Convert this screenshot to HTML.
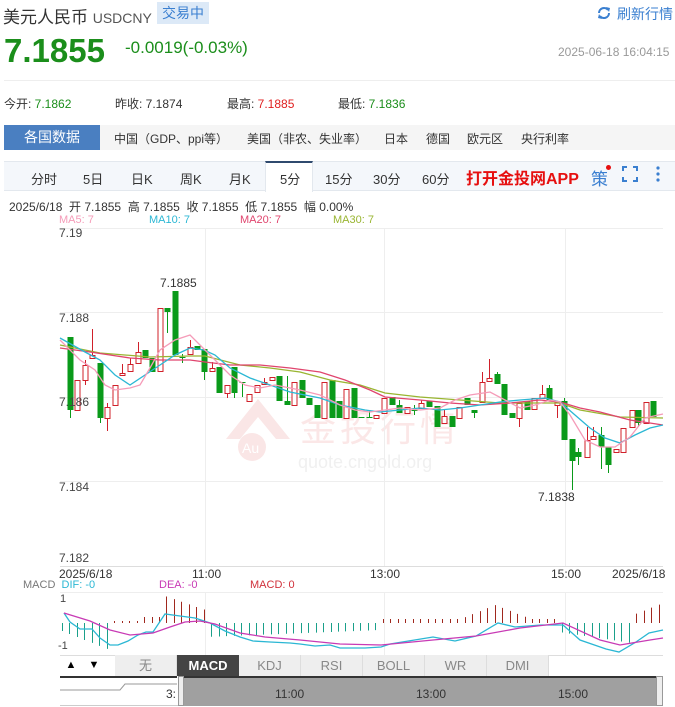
<!DOCTYPE html>
<html><head><meta charset="utf-8">
<style>
*{margin:0;padding:0;box-sizing:border-box}
body{width:675px;height:707px;background:#fff;font-family:"Liberation Sans","Noto Sans CJK SC",sans-serif;position:relative;overflow:hidden;color:#333}
.a{position:absolute;white-space:nowrap}
</style></head><body>
<div class="a" style="left:3px;top:3px;font-size:17px;color:#333">美元人民币 <span style="font-size:14px;color:#555">USDCNY</span></div>
<div class="a" style="left:157px;top:2px;width:52px;height:22px;background:#dce9f7;color:#3a7fd0;font-size:14px;line-height:22px;text-align:center">交易中</div>
<svg class="a" style="left:596px;top:5px" width="16" height="16" viewBox="0 0 16 16"><path d="M3 8a5 5 0 0 1 9-3" fill="none" stroke="#3a7fd0" stroke-width="2"/><path d="M13 8a5 5 0 0 1-9 3" fill="none" stroke="#3a7fd0" stroke-width="2"/><path d="M10 2l4 1-1 4z M6 14l-4-1 1-4z" fill="#3a7fd0"/></svg>
<div class="a" style="left:617px;top:4px;font-size:14px;color:#3a7fd0">刷新行情</div>
<div class="a" style="left:4px;top:32px;font-size:33px;font-weight:bold;color:#1b8e1b">7.1855</div>
<div class="a" style="left:125px;top:38px;font-size:17px;color:#1b8e1b">-0.0019(-0.03%)</div>
<div class="a" style="left:558px;top:45px;font-size:12px;color:#999">2025-06-18 16:04:15</div>
<div class="a" style="left:4px;top:80px;width:671px;height:1px;background:#eee"></div>
<div class="a" style="left:4px;top:95px;font-size:12px;color:#333">今开: <span style="color:#1b8e1b">7.1862</span></div>
<div class="a" style="left:115px;top:95px;font-size:12px;color:#333">昨收: 7.1874</div>
<div class="a" style="left:227px;top:95px;font-size:12px;color:#333">最高: <span style="color:#e02020">7.1885</span></div>
<div class="a" style="left:338px;top:95px;font-size:12px;color:#333">最低: <span style="color:#1b8e1b">7.1836</span></div>
<div class="a" style="left:4px;top:125px;width:671px;height:25px;background:#f5f5f5"></div>
<div class="a" style="left:4px;top:125px;width:96px;height:25px;background:#4a7fc1;color:#fff;font-size:14px;line-height:25px;text-align:center">各国数据</div>
<div class="a" style="left:114px;top:130px;font-size:12px;color:#333">中国（GDP、ppi等）</div>
<div class="a" style="left:247px;top:130px;font-size:12px;color:#333">美国（非农、失业率）</div>
<div class="a" style="left:384px;top:130px;font-size:12px;color:#333">日本</div>
<div class="a" style="left:426px;top:130px;font-size:12px;color:#333">德国</div>
<div class="a" style="left:467px;top:130px;font-size:12px;color:#333">欧元区</div>
<div class="a" style="left:521px;top:130px;font-size:12px;color:#333">央行利率</div>
<div class="a" style="left:4px;top:161px;width:671px;height:30px;background:#f4f7fb;border-top:1px solid #e3e8ee;border-bottom:1px solid #e3e8ee"></div>
<div class="a" style="left:265px;top:161px;width:48px;height:31px;background:#fff;border-top:2px solid #2f4a6e;border-left:1px solid #e3e8ee;border-right:1px solid #e3e8ee"></div>
<div class="a" style="top:169px;left:0;font-size:13px;color:#333;width:675px;height:18px">
<span class="a" style="left:31px">分时</span><span class="a" style="left:83px">5日</span><span class="a" style="left:131px">日K</span><span class="a" style="left:180px">周K</span><span class="a" style="left:229px">月K</span><span class="a" style="left:280px">5分</span><span class="a" style="left:325px">15分</span><span class="a" style="left:373px">30分</span><span class="a" style="left:422px">60分</span></div>
<div class="a" style="left:466px;top:165px;font-size:16px;font-weight:bold;color:#e61010">打开金投网APP</div>
<div class="a" style="left:591px;top:165px;font-size:17px;color:#3a7fd0">策</div>
<div class="a" style="left:606px;top:165px;width:5px;height:5px;border-radius:50%;background:#e61010"></div>
<svg class="a" style="left:622px;top:166px" width="16" height="16"><path d="M1 5V1h4M11 1h4v4M15 11v4h-4M5 15H1v-4" fill="none" stroke="#3a7fd0" stroke-width="2"/></svg>
<svg class="a" style="left:655px;top:166px" width="6" height="16"><circle cx="3" cy="2" r="1.6" fill="#3a7fd0"/><circle cx="3" cy="8" r="1.6" fill="#3a7fd0"/><circle cx="3" cy="14" r="1.6" fill="#3a7fd0"/></svg>
<div class="a" style="left:9px;top:198px;font-size:12px;color:#333">2025/6/18&nbsp; 开 7.1855&nbsp; 高 7.1855&nbsp; 收 7.1855&nbsp; 低 7.1855&nbsp; 幅 0.00%</div>
<div class="a" style="left:59px;top:214px;font-size:11px;color:#f59bb8">MA5: 7</div>
<div class="a" style="left:149px;top:214px;font-size:11px;color:#2bb7d4">MA10: 7</div>
<div class="a" style="left:240px;top:214px;font-size:11px;color:#e0456e">MA20: 7</div>
<div class="a" style="left:333px;top:214px;font-size:11px;color:#99b531">MA30: 7</div>
<div class="a" style="left:300px;top:400px;font-size:36px;color:#fbe7e7;letter-spacing:4px">金投行情</div>
<div class="a" style="left:298px;top:452px;font-size:18px;color:#f0f0f0">quote.cngold.org</div>
<svg class="a" style="left:222px;top:395px" width="72" height="72"><path d="M36 4L4 44h14l18-22 18 22h14z" fill="#fae6e6"/><circle cx="30" cy="52" r="14" fill="#fae6e6"/><text x="20" y="58" font-size="14" fill="#fff" font-family="Liberation Sans">Au</text></svg>
<svg id="ch" class="a" style="left:0;top:0" width="675" height="707"></svg>
<div class="a" style="left:59px;top:226px;font-size:12px;color:#444">7.19</div>
<div class="a" style="left:59px;top:311px;font-size:12px;color:#444">7.188</div>
<div class="a" style="left:59px;top:395px;font-size:12px;color:#444">7.186</div>
<div class="a" style="left:59px;top:480px;font-size:12px;color:#444">7.184</div>
<div class="a" style="left:59px;top:551px;font-size:12px;color:#444">7.182</div>
<div class="a" style="left:160px;top:276px;font-size:12px;color:#333">7.1885</div>
<div class="a" style="left:538px;top:490px;font-size:12px;color:#333">7.1838</div>
<div class="a" style="left:59px;top:567px;font-size:12px;color:#333">2025/6/18</div>
<div class="a" style="left:192px;top:567px;font-size:12px;color:#333">11:00</div>
<div class="a" style="left:370px;top:567px;font-size:12px;color:#333">13:00</div>
<div class="a" style="left:551px;top:567px;font-size:12px;color:#333">15:00</div>
<div class="a" style="left:612px;top:567px;font-size:12px;color:#333">2025/6/18</div>
<div class="a" style="left:23px;top:579px;font-size:11px;color:#777">MACD&nbsp; <span style="color:#2bb7d4">DIF: -0</span></div>
<div class="a" style="left:159px;top:579px;font-size:11px;color:#c83ab5">DEA: -0</div>
<div class="a" style="left:250px;top:579px;font-size:11px;color:#d0303a">MACD: 0</div>
<div class="a" style="left:60px;top:593px;font-size:11px;color:#444">1</div>
<div class="a" style="left:58px;top:640px;font-size:11px;color:#444">-1</div>
<div class="a" style="left:60px;top:655px;width:490px;height:21px;font-size:13px;color:#888">
<span class="a" style="left:0;width:22px;height:21px;line-height:21px;text-align:center;color:#000;font-size:11px">▲</span>
<span class="a" style="left:23px;width:22px;height:21px;line-height:21px;text-align:center;color:#000;font-size:11px">▼</span>
<span class="a" style="left:55px;width:62px;height:21px;line-height:21px;text-align:center;background:#eee;border-right:1px solid #ddd">无</span>
<span class="a" style="left:117px;width:62px;height:21px;line-height:21px;text-align:center;background:#444;color:#fff;font-weight:bold">MACD</span>
<span class="a" style="left:179px;width:62px;height:21px;line-height:21px;text-align:center;background:#eee;border-right:1px solid #ddd">KDJ</span>
<span class="a" style="left:241px;width:62px;height:21px;line-height:21px;text-align:center;background:#eee;border-right:1px solid #ddd">RSI</span>
<span class="a" style="left:303px;width:62px;height:21px;line-height:21px;text-align:center;background:#eee;border-right:1px solid #ddd">BOLL</span>
<span class="a" style="left:365px;width:62px;height:21px;line-height:21px;text-align:center;background:#eee;border-right:1px solid #ddd">WR</span>
<span class="a" style="left:427px;width:62px;height:21px;line-height:21px;text-align:center;background:#eee;border-right:1px solid #ddd">DMI</span></div>
<div class="a" style="left:60px;top:676px;width:117px;height:2px;background:#333"></div>
<div class="a" style="left:60px;top:705px;width:603px;height:1px;background:#ccc"></div>
<div class="a" style="left:184px;top:676px;width:478px;height:30px;background:#a0a0a0;border-top:2px solid #333"></div>
<div class="a" style="left:178px;top:676px;width:6px;height:30px;background:#eee;border:1px solid #999"></div>
<div class="a" style="left:656px;top:676px;width:7px;height:30px;background:#eee;border:1px solid #999"></div>
<div class="a" style="left:166px;top:687px;font-size:12px;color:#333">3:</div>
<div class="a" style="left:275px;top:687px;font-size:12px;color:#333">11:00</div>
<div class="a" style="left:416px;top:687px;font-size:12px;color:#333">13:00</div>
<div class="a" style="left:558px;top:687px;font-size:12px;color:#333">15:00</div>
<script>
var s='';
function L(x1,y1,x2,y2,c){s+='<line x1="'+x1+'" y1="'+y1+'" x2="'+x2+'" y2="'+y2+'" stroke="'+c+'" stroke-width="1"/>';}
[228,312,397,481,566].forEach(function(y){L(60,y+.5,663,y+.5,'#eee')});
[205,384,565].forEach(function(x){L(x+.5,228,x+.5,566,'#eee');L(x+.5,592,x+.5,655,'#eee')});
L(60,566.5,663,566.5,'#ddd');L(60,592.5,663,592.5,'#eee');L(60,655.5,663,655.5,'#ddd');
var c=[[70,337,410,337,418,'g'],[77,380,410,380,410,'r'],[85,365,380,360,385,'r'],[92,355,358,329,358,'r'],[100,363,418,363,423,'g'],[107,407,418,403,431,'r'],[115,385,405,385,405,'r'],[122,373,375,364,375,'r'],[130,364,371,358,371,'r'],[138,352,363,342,363,'r'],[145,350,358,350,358,'g'],[152,358,372,358,372,'g'],[160,308,371,308,371,'r'],[167,308,312,308,333,'g'],[175,291,355,291,355,'g'],[182,357,358,354,363,'g'],[190,347,354,340,354,'r'],[197,346,350,346,350,'g'],[204,349,372,349,380,'g'],[212,368,371,362,371,'r'],[219,367,393,367,393,'g'],[227,385,393,385,398,'r'],[234,367,393,367,398,'g'],[242,382,383,382,397,'g'],[249,394,401,394,401,'r'],[257,385,392,385,392,'r'],[264,382,384,378,384,'r'],[272,377,380,377,380,'r'],[279,376,401,376,401,'g'],[287,401,405,376,405,'g'],[294,382,405,382,405,'r'],[302,380,398,380,398,'g'],[309,398,405,398,405,'g'],[317,405,418,405,418,'g'],[324,382,418,382,418,'r'],[332,380,418,380,418,'g'],[339,401,418,401,418,'g'],[346,389,418,389,418,'r'],[354,388,418,388,418,'g'],[361,417,418,417,418,'g'],[369,417,418,410,418,'g'],[376,415,418,415,418,'r'],[384,398,413,398,413,'r'],[392,397,405,397,405,'g'],[399,405,413,400,413,'g'],[407,407,413,407,413,'r'],[414,410,411,405,415,'g'],[421,403,408,400,408,'r'],[429,401,407,401,407,'g'],[437,406,427,406,427,'g'],[444,416,423,410,423,'r'],[452,416,427,416,427,'g'],[459,407,418,407,418,'r'],[467,398,405,398,405,'g'],[474,410,413,410,418,'g'],[482,382,402,372,402,'r'],[489,378,381,359,381,'r'],[497,374,384,372,384,'g'],[504,384,415,384,415,'g'],[512,413,418,413,418,'g'],[519,403,418,403,427,'r'],[527,401,410,401,410,'g'],[534,398,409,398,409,'r'],[542,394,398,385,398,'r'],[549,388,401,385,401,'g'],[557,402,405,402,418,'r'],[564,401,440,398,440,'g'],[572,439,461,439,490,'g'],[578,452,457,448,465,'g'],[587,440,457,427,457,'r'],[593,436,439,427,439,'r'],[601,435,447,427,469,'g'],[608,447,465,447,473,'g'],[616,449,452,449,452,'r'],[623,428,452,428,452,'r'],[632,410,427,410,427,'r'],[638,410,423,410,427,'g'],[646,402,423,402,423,'r'],[653,401,417,401,417,'g']];
c.forEach(function(k){var col=k[5]=='g'?'#0a9a1a':'#d0202a';L(k[0]+.5,k[3],k[0]+.5,k[4],col);
 var h=Math.max(k[2]-k[1],1);
 if(k[5]=='g')s+='<rect x="'+(k[0]-2.5)+'" y="'+k[1]+'" width="6" height="'+h+'" fill="'+col+'"/>';
 else s+='<rect x="'+(k[0]-2)+'" y="'+(k[1]+.5)+'" width="5" height="'+h+'" fill="#fff" stroke="'+col+'"/>';});
function P(a,c,w){s+='<polyline fill="none" stroke="'+c+'" stroke-width="'+(w||1.3)+'" points="'+a.map(function(p){return p.join(',')}).join(' ')+'"/>';}
P([[60,345],[100,353],[150,357],[190,356],[205,356],[240,365],[270,368],[300,372],[330,380],[360,385],[385,393],[420,397],[460,400],[500,403],[540,403],[560,403],[580,410],[620,417],[663,418]],'#99b531');
P([[60,348],[90,352],[110,355],[130,358],[160,360],[190,360],[205,362],[230,365],[260,365],[290,368],[320,372],[345,380],[370,390],[385,397],[420,400],[450,403],[480,405],[510,403],[540,400],[560,402],[580,408],[600,412],[630,420],[663,425]],'#e0456e');
P([[60,338],[85,352],[100,360],[115,375],[130,385],[145,375],[160,365],[175,355],[190,348],[204,350],[215,355],[230,368],[250,378],[270,385],[290,392],[320,398],[340,405],[365,410],[380,412],[400,410],[420,408],[440,410],[460,408],[480,405],[500,402],[520,400],[545,398],[560,402],[575,415],[590,428],[605,438],[620,443],[635,435],[650,428],[663,425]],'#2bb7d4');
P([[60,340],[80,360],[95,370],[105,385],[115,390],[130,388],[140,385],[150,368],[160,350],[175,340],[190,335],[200,345],[215,360],[230,375],[245,385],[260,388],[275,385],[300,390],[320,395],[340,405],[355,410],[370,412],[385,410],[400,408],[420,410],[440,408],[455,400],[470,395],[490,392],[505,400],[520,408],[535,405],[550,400],[560,402],[570,415],[585,440],[600,447],[615,447],[630,437],[645,418],[663,414]],'#f59bb8');
var z=623;
for(var x=62;x<663;x+=7.46){var v;
 if(x<112)v=-(8+ (x-62)*0.4);else if(x<140)v=2;else if(x<205)v=(x<165?6:(27-(x-165)*0.35));
 else if(x<380)v=-(14-(x-205)*0.04);else if(x<560){v=4+Math.max(0,14-Math.abs(x-495)*0.4);}
 else if(x<633)v=-(10+ (x-565)*0.15);else v=8+(x-633)*0.4;
 L(Math.round(x)+.5,z,Math.round(x)+.5,z-v,v>0?'#a0281e':'#1aa08a');}
P([[64,613],[70,622],[80,629],[92,629],[100,638],[110,645],[118,645],[128,641],[138,635],[146,632],[153,632],[165,614],[180,616],[195,618],[210,623],[225,631],[240,637],[253,641],[270,642],[290,643],[300,644],[315,646],[330,645],[340,648],[365,648],[381,647],[390,644],[433,637],[455,641],[476,636],[498,623],[515,627],[541,625],[563,625],[580,640],[606,649],[619,652],[636,642],[649,633],[663,630]],'#2bb7d4');
P([[64,613],[90,621],[110,630],[130,635],[153,633],[170,627],[185,622],[200,621],[215,624],[240,633],[265,637],[300,640],[340,644],[381,645],[433,640],[476,636],[520,628],[563,623],[600,640],[620,645],[650,640],[663,638]],'#c83ab5');
P([[60,690],[120,690],[125,684],[177,684]],'#999',1);
P([[184,695],[195,688],[205,700],[220,690],[240,693],[255,682],[262,690],[270,697],[290,693],[320,695],[350,690],[380,700],[400,695],[420,693],[450,693],[480,690],[500,695],[520,688],[540,693],[560,690],[600,698],[630,693],[655,698]],'#666',1);
document.getElementById('ch').innerHTML=s;
</script>
</body></html>
